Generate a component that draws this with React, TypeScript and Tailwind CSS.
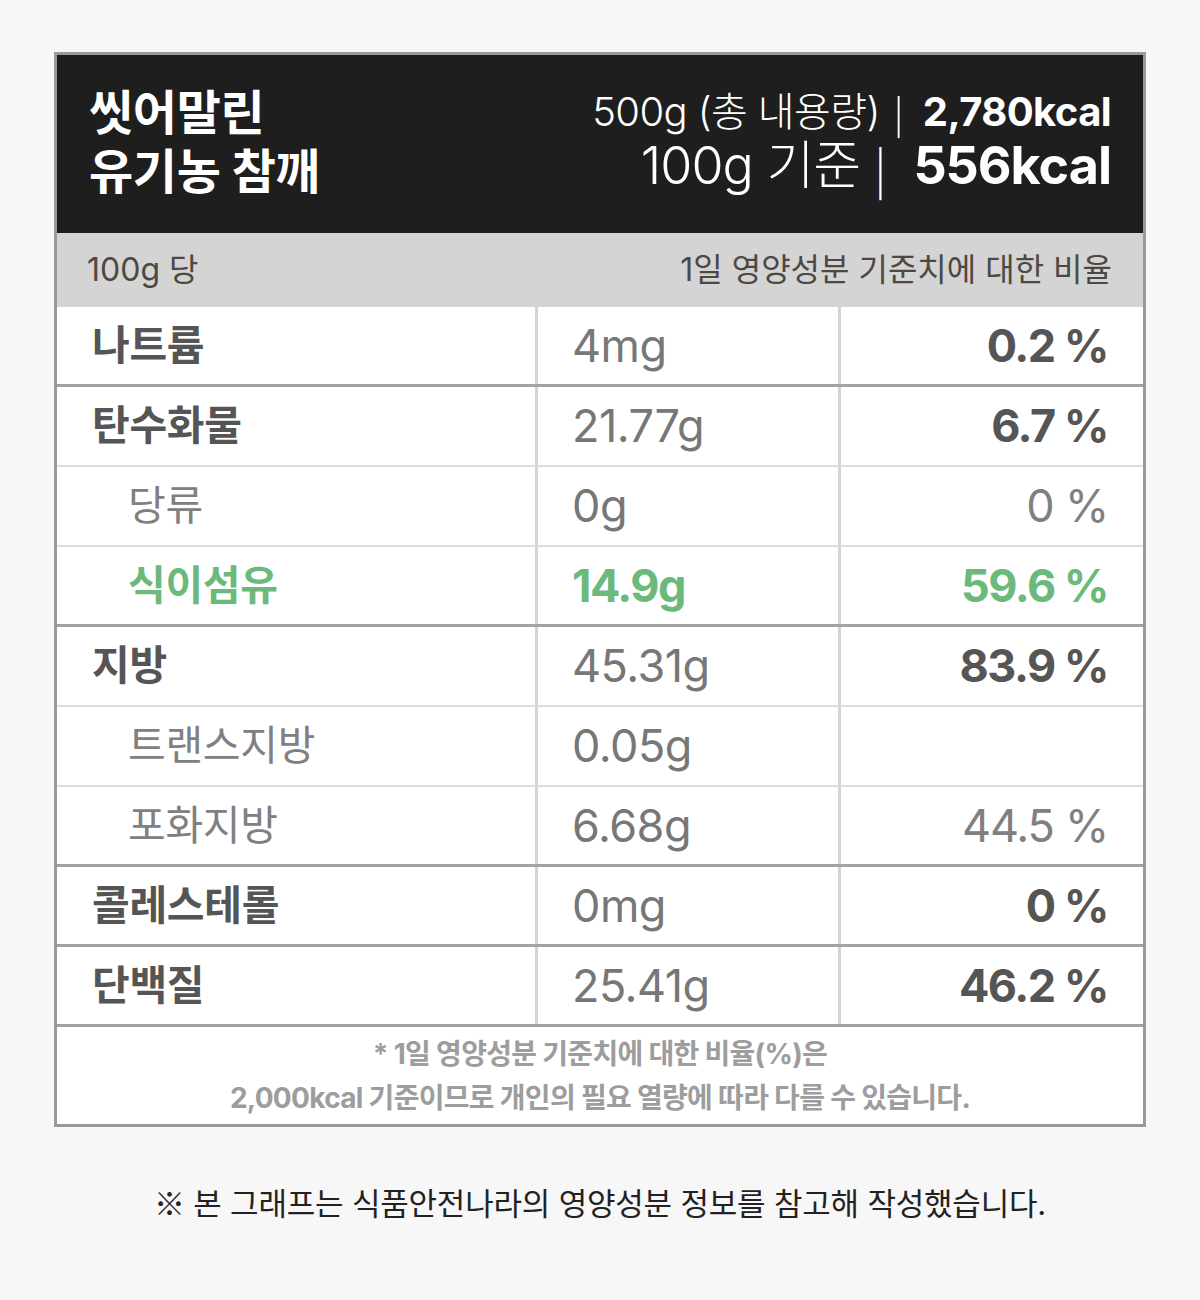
const rows = [
  { name: "나트륨", value: "4mg", pct: "0.2 %", level: 0, border: "thick" },
  { name: "탄수화물", value: "21.77g", pct: "6.7 %", level: 0, border: "thin" },
  { name: "당류", value: "0g", pct: "0 %", level: 1, border: "thin" },
  { name: "식이섬유", value: "14.9g", pct: "59.6 %", level: 2, border: "thick" },
  { name: "지방", value: "45.31g", pct: "83.9 %", level: 0, border: "thin" },
  { name: "트랜스지방", value: "0.05g", pct: "", level: 1, border: "thin" },
  { name: "포화지방", value: "6.68g", pct: "44.5 %", level: 1, border: "thick" },
  { name: "콜레스테롤", value: "0mg", pct: "0 %", level: 0, border: "thick" },
  { name: "단백질", value: "25.41g", pct: "46.2 %", level: 0, border: "thick" },
];

const cjk = { fontFamily: '"Noto Sans CJK KR", sans-serif' };

function Row({ r }: { r: (typeof rows)[number] }) {
  const border = r.border === "thick" ? "border-b-[3px] border-[#a3a3a3]" : "border-b-2 border-[#dcdcdc]";
  const nameCls =
    r.level === 0
      ? "pl-[35px] font-bold text-[#555]"
      : r.level === 1
        ? "pl-[71px] text-[#808080]"
        : "pl-[71px] font-bold text-[#6bb97b]";
  const valCls = r.level === 2 ? "font-bold text-[#6bb97b] tracking-[-1.5px]" : "text-[#777] tracking-[-0.5px]";
  const pctCls =
    r.level === 2
      ? "font-bold text-[#6bb97b] tracking-[-1.5px]"
      : r.level === 1
        ? "text-[#808080] tracking-[-1.2px]"
        : "font-bold text-[#555] tracking-[-1.5px]";
  return (
    <div className={`grid grid-cols-[481px_303px_1fr] h-[80px] ${border}`}>
      <div className={`flex items-center text-[41px] tracking-[-0.3px] border-r-[3px] border-[#d4d4d4] ${nameCls}`}>
        {r.name}
      </div>
      <div className={`flex items-center pl-[34px] text-[45px] border-r-[3px] border-[#d4d4d4] ${valCls}`}>
        {r.value}
      </div>
      <div className={`flex items-center justify-end pr-[35px] text-[45px] ${pctCls}`}>
        {r.pct}
      </div>
    </div>
  );
}

export default function App() {
  return (
    <div
      className="w-[1200px] h-[1300px] bg-[#f7f7f7] pt-[52px]"
      style={{ fontFamily: 'Inter, "Noto Sans CJK KR", sans-serif' }}
    >
      <div className="mx-auto w-[1092px] border-[3px] border-[#9a9a9a] bg-white">
        <div className="bg-[#1e1e1e] h-[178px] flex justify-between items-center pl-[32px] pr-[32px]">
          <div className="text-white font-bold text-[48px] leading-[59px] tracking-[-0.3px] pb-[4px]">
            <div>씻어말린</div>
            <div>유기농 참깨</div>
          </div>
          <div className="text-white text-right pb-[6px]">
            <div className="h-[50px] text-[40px] tracking-[-0.6px] font-light flex items-center justify-end">
              <span>500g (총 내용량)</span>
              <span className="font-light leading-none text-[38px] ml-[14px] mr-[20px]" style={cjk}>|</span>
              <span className="font-bold">2,780kcal</span>
            </div>
            <div className="h-[58px] text-[52px] tracking-[-1px] font-light flex items-center justify-end">
              <span>100g 기준</span>
              <span className="font-light leading-none text-[48px] ml-[14px] mr-[28px]" style={cjk}>|</span>
              <span className="font-bold">556kcal</span>
            </div>
          </div>
        </div>
        <div className="bg-[#d4d4d4] h-[74px] flex items-center justify-between pl-[30px] pr-[31px] text-[32px] tracking-[0px] text-[#4d4843]">
          <span>100g 당</span>
          <span>1일 영양성분 기준치에 대한 비율</span>
        </div>
        {rows.map((r) => (
          <Row key={r.name} r={r} />
        ))}
        <div className="h-[97px] flex flex-col items-center justify-center text-[#9d9d9d] font-bold text-[28px] leading-[44px] tracking-[-0.7px]">
          <div>* 1일 영양성분 기준치에 대한 비율(%)은</div>
          <div>2,000kcal 기준이므로 개인의 필요 열량에 따라 다를 수 있습니다.</div>
        </div>
      </div>
      <div className="mt-[52px] text-center text-[31px] tracking-[-0.2px] text-[#222]">
        <span style={cjk}>※</span> 본 그래프는 식품안전나라의 영양성분 정보를 참고해 작성했습니다.
      </div>
    </div>
  );
}
